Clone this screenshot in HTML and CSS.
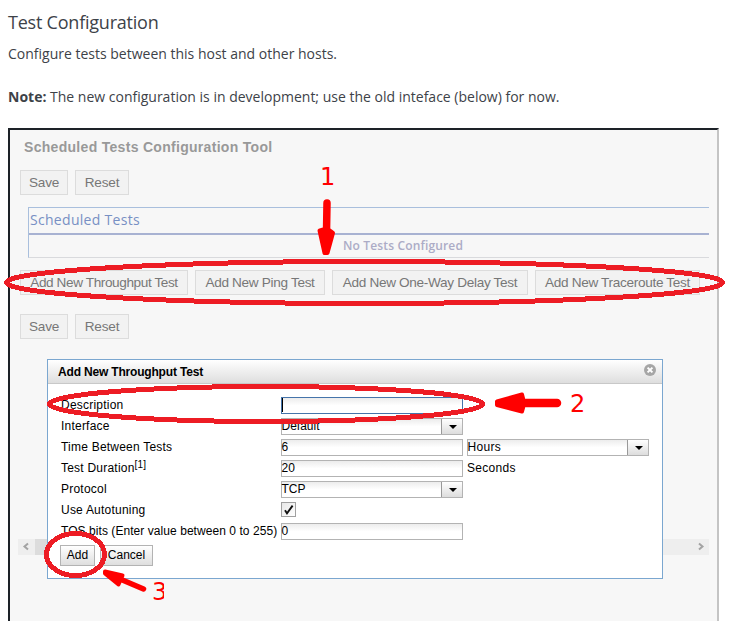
FILE: index.html
```html
<!DOCTYPE html>
<html lang="en">
<head>
<meta charset="utf-8">
<title>Test Configuration</title>
<link rel="stylesheet" href="styles.css">
</head>
<body>
<main class="page">
  <h1 class="title">Test Configuration</h1>
  <p class="intro">Configure tests between this host and other hosts.</p>
  <p class="note"><strong>Note:</strong> The new configuration is in development; use the old inteface (below) for now.</p>
  <section class="frame">
    <h2 class="tool-title"><span>Scheduled Tests Configuration Tool</span></h2>
    <div class="actions"><button class="btn save">Save</button><button class="btn reset">Reset</button></div>
    <div class="tests">
      <div class="tests-head">Scheduled Tests</div>
      <div class="tests-empty">No Tests Configured</div>
    </div>
    <div class="actions add-row"><button class="btn throughput">Add New Throughput Test</button><button class="btn ping">Add New Ping Test</button><button class="btn delay">Add New One-Way Delay Test</button><button class="btn trace">Add New Traceroute Test</button></div>
    <div class="actions lower"><button class="btn save">Save</button><button class="btn reset">Reset</button></div>
    <div class="scrollbar">
      <svg width="17" height="16"><path d="M10 4.500 6.500 7.500l3.500 3" class="chev"/></svg>
      <div class="thumb"></div>
      <svg width="17" height="16"><path d="M7 4.500 10.500 7.500l-3.500 3" class="chev"/></svg>
    </div>
  </section>
</main>

<section class="dialog">
  <header class="dialog-head">
    <span>Add New Throughput Test</span>
    <svg class="close" width="12" height="12" viewBox="0 0 12 12"><circle cx="6" cy="6" r="6" fill="#a6a6a6"/><path d="M3.6 3.6 8.4 8.4M8.4 3.6 3.6 8.4" stroke="#fff" stroke-width="2"/></svg>
  </header>
  <div class="form">
    <div class="row"><label>Description</label><div class="field focus"><i class="caret"></i></div></div>
    <div class="row"><label>Interface</label><div class="field">Default<b class="drop"></b></div></div>
    <div class="row"><label>Time Between Tests</label><div class="field">6</div><div class="field unit">Hours<b class="drop"></b></div></div>
    <div class="row"><label>Test Duration<sup>[1]</sup></label><div class="field">20</div><span class="unit seconds">Seconds</span></div>
    <div class="row"><label>Protocol</label><div class="field">TCP<b class="drop"></b></div></div>
    <div class="row"><label>Use Autotuning</label><div class="check"><svg width="13" height="13" viewBox="0 0 13 13"><path d="M3 7.2 5 10.4 10.6 2.6" fill="none" stroke="#111" stroke-width="1.9"/></svg></div></div>
    <div class="row"><label class="long">TOS bits (Enter value between 0 to 255)</label><div class="field">0</div></div>
  </div>
  <footer class="dialog-foot"><button class="dbtn add">Add</button><button class="dbtn cancel">Cancel</button></footer>
</section>

<svg class="marks" width="729" height="621" viewBox="0 0 729 621">
  <defs><clipPath id="three"><rect x="148" y="575" width="16" height="30"/></clipPath></defs>
  <g class="ring">
    <ellipse cx="364.5" cy="282.5" rx="358" ry="21"/>
    <ellipse cx="266" cy="404" rx="216.5" ry="17.5"/>
    <ellipse cx="75.5" cy="554.5" rx="29" ry="21"/>
  </g>
  <g class="arrow">
    <path d="M327 203 326.500 232" stroke-width="7.500"/>
    <path class="head" d="M319.500 230.500 Q327 227 333 233 L327.500 253 H324.500 Z"/>
    <path d="M522 403 H557" stroke-width="8.500"/>
    <path class="head" d="M497 401.500 L522 394.500 Q525 403 522 411.500 L497 405 Z"/>
    <path d="M120 579 143.500 589" stroke-width="5.500"/>
    <path class="head" d="M105 571.500 L122.500 575.500 L118.500 584.500 L105 573.500 Z"/>
  </g>
  <text x="320" y="185">1</text>
  <text x="570" y="412">2</text>
  <text x="152" y="600" clip-path="url(#three)">3</text>
</svg>
</body>
</html>
```

FILE: styles.css
```css
* { box-sizing: border-box; }
body { margin: 0; height: 621px; overflow: hidden; background: #fff; position: relative; }
button { margin: 0; padding: 0; white-space: nowrap; }
.page { padding: 0 10px 0 8px; font: 14px/20px "Open Sans", sans-serif; color: #3d4248; }
.title { margin: 0; padding-top: 10px; font-size: 18px; font-weight: 400; line-height: 24px; letter-spacing: -.22px; }
.intro { margin: 10px 0 0; }
.note { margin: 23px 0 0; white-space: nowrap; }
.frame {
  margin-top: 21px; height: 520px; padding: 10px 8px 0 10px;
  border: 2px solid #c4c4c4; border-top-color: #1d2228; border-left-color: #1d2228;
  background: #f7f7f7; font-family: "Liberation Sans", Arial, sans-serif;
}
.tool-title { margin: 0 0 0 4px; height: 30px; font-size: 14px; line-height: 14px; color: #999; letter-spacing: .3px; }
.actions { display: flex; gap: 7px; }
.btn { height: 25px; border: 1px solid #dcdcdc; background: #f2f2f2; color: #777; font: 13.6px/22px "Liberation Sans", Arial, sans-serif; letter-spacing: -.32px; padding-top: 1px; }
.save { width: 48px; }
.reset { width: 54px; }
.save, .reset { letter-spacing: -.2px; }
.throughput { width: 168px; letter-spacing: -.4px; }
.ping { width: 130px; }
.delay { width: 196px; }
.trace { width: 165px; }
.tests {
  margin: 12px 0 0 8px; height: 51px; border: 1px solid #a9bfdd; border-right: 0; border-bottom-color: #d9dadd;
  font-family: "Open Sans", sans-serif;
}
.tests-head { height: 27px; padding-left: 1px; border-bottom: 2px solid #a8b2d2; font-size: 14px; line-height: 24px; letter-spacing: .3px; color: #7890c4; }
.tests-empty { height: 22px; padding-left: 314px; font-size: 12px; font-weight: 600; line-height: 21px; letter-spacing: .15px; color: #acacc6; }
.add-row { margin-top: 12px; }
.lower { margin-top: 19px; }
.scrollbar { margin: 200px 0 0 -2px; height: 16px; display: flex; background: #eee; }
.thumb { flex: 1; margin-right: 100px; background: #dcdcdc; }
.chev { fill: none; stroke: #a3a3a3; stroke-width: 2; }

.dialog {
  position: absolute; left: 47px; top: 359px; width: 616px; height: 220px;
  border: 1px solid #7ba7d0; background: #fff; color: #000; font: 12px/15px "Liberation Sans", Arial, sans-serif;
}
.dialog-head {
  height: 24px; padding: 0 6px 0 10px; display: flex; justify-content: space-between; align-items: center;
  border-bottom: 1px solid #c8c8c8; background: linear-gradient(#fff, #dedede); font-weight: 700; letter-spacing: -.18px;
}
.dialog-head span { padding-top: 2px; }
.close { margin-bottom: 3px; }
.form { padding: 13px 0 0 13px; display: grid; grid-auto-rows: 17px; row-gap: 4px; }
.row { display: grid; grid-template-columns: 220px 182px 182px; }
.row label { white-space: nowrap; padding-top: 1px; letter-spacing: .22px; }
.row .long { letter-spacing: .06px; }
sup { font-size: 10px; line-height: 0; vertical-align: 4px; }
.field { position: relative; height: 17px; border: 1px solid #b3b3b3; background: linear-gradient(#ececec, #fff 50%); line-height: 15px; text-indent: -.5px; }
.focus { border-color: #4574aa; }
.caret { display: block; width: 1px; height: 14px; background: #000; }
.unit { margin-left: 4px; letter-spacing: .3px; }
.seconds { padding-top: 1px; }
div.unit { width: 182px; }
.drop { position: absolute; right: 0; top: 0; width: 21px; height: 15px; border-left: 1px solid #999; background: linear-gradient(#fff, #ddd); }
.drop::after { content: ""; position: absolute; left: 7px; top: 6px; border: 4px solid transparent; border-top: 4px solid #000; border-bottom: 0; }
.check { width: 15px; height: 15px; border: 1px solid #a0a0a0; background: linear-gradient(135deg, #e8e8e8, #fff); }
.check svg { display: block; }
.dialog-foot { margin: 5px 0 0 12px; display: flex; gap: 5px; }
.dbtn { height: 21px; border: 1px solid #b3b3b3; background: linear-gradient(#fff, #dedede); color: #000; font: 12px/17px "Liberation Sans", Arial, sans-serif; }
.add { width: 35px; }
.cancel { width: 53px; }

.marks { position: absolute; left: 0; top: 0; pointer-events: none; }
.ring { fill: none; stroke: #ed1c24; stroke-width: 5; shape-rendering: crispEdges; }
.arrow { fill: none; stroke: #f00; stroke-linecap: round; stroke-linejoin: round; }
.head { fill: #f00; stroke-width: 4; }
.marks text { font: 24px "DejaVu Sans", Verdana, sans-serif; fill: #f00; }
```
